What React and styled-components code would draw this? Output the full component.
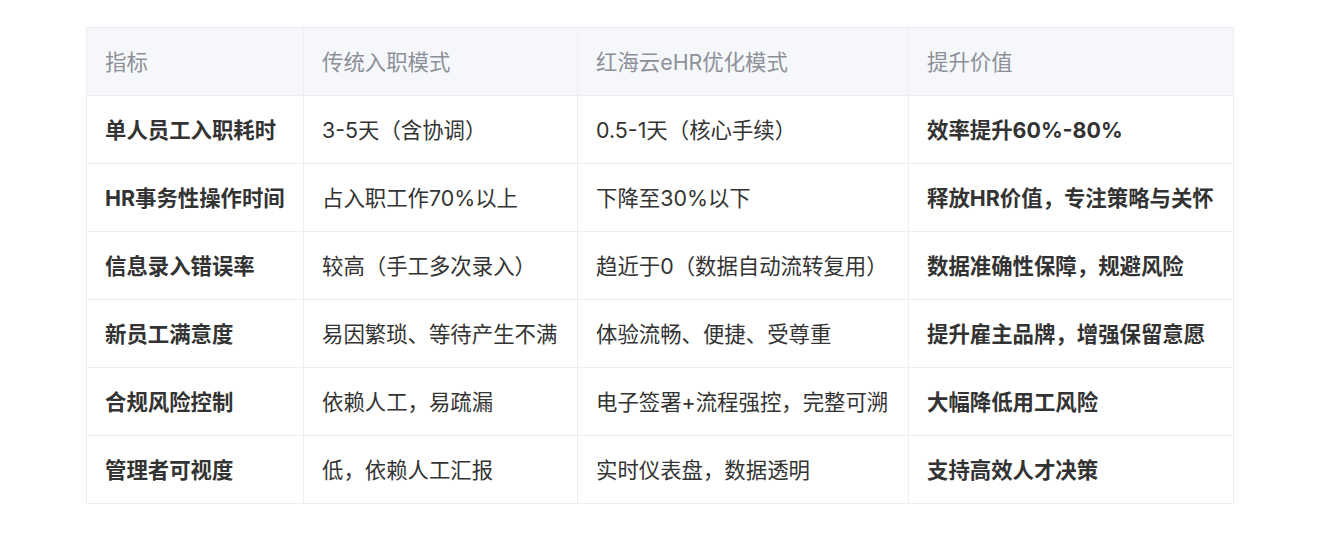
import React from "react";
import styled, { createGlobalStyle } from "styled-components";

const Global = createGlobalStyle`
  html, body { margin: 0; padding: 0; background: #ffffff; }
  body { font-family: Inter, "Noto Sans CJK SC", sans-serif; }
`;

const Page = styled.div`
  padding: 27px 0 0 86px;
`;

const Table = styled.table`
  border-collapse: collapse;
  table-layout: fixed;
  width: 1147px;
  font-family: Inter, "Noto Sans CJK SC", sans-serif;
  font-size: 21.4px;
`;

const Th = styled.th`
  height: 64px;
  padding: 0 18px 3px;
  text-align: left;
  font-weight: 400;
  color: #8c9099;
  background: #f6f7fa;
  border: 1px solid #eceef1;
  white-space: nowrap;
`;

const Td = styled.td`
  height: 64px;
  padding: 0 18px 3px;
  text-align: left;
  font-weight: ${(p) => (p.$bold ? 700 : 400)};
  color: #333333;
  background: #ffffff;
  border: 1px solid #eceef1;
  white-space: nowrap;
`;

const cols = [217, 274, 331, 325];
const head = ["指标", "传统入职模式", "红海云eHR优化模式", "提升价值"];
const rows = [
  ["单人员工入职耗时", "3-5天（含协调）", "0.5-1天（核心手续）", "效率提升60%-80%"],
  ["HR事务性操作时间", "占入职工作70%以上", "下降至30%以下", "释放HR价值，专注策略与关怀"],
  ["信息录入错误率", "较高（手工多次录入）", "趋近于0（数据自动流转复用）", "数据准确性保障，规避风险"],
  ["新员工满意度", "易因繁琐、等待产生不满", "体验流畅、便捷、受尊重", "提升雇主品牌，增强保留意愿"],
  ["合规风险控制", "依赖人工，易疏漏", "电子签署+流程强控，完整可溯", "大幅降低用工风险"],
  ["管理者可视度", "低，依赖人工汇报", "实时仪表盘，数据透明", "支持高效人才决策"],
];

export default function App() {
  return (
    <Page>
      <Global />
      <Table>
        <colgroup>
          {cols.map((w, i) => (
            <col key={i} style={{ width: w }} />
          ))}
        </colgroup>
        <thead>
          <tr>
            {head.map((h) => (
              <Th key={h}>{h}</Th>
            ))}
          </tr>
        </thead>
        <tbody>
          {rows.map((r, i) => (
            <tr key={i}>
              {r.map((c, j) => (
                <Td key={j} $bold={j === 0 || j === 3}>
                  {c}
                </Td>
              ))}
            </tr>
          ))}
        </tbody>
      </Table>
    </Page>
  );
}
